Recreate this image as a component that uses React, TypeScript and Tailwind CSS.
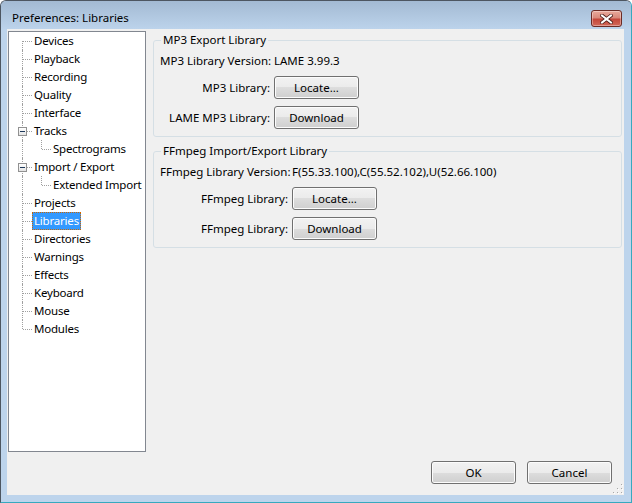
import React from 'react'

type Item = { label: string; level: number; expanded?: boolean; selected?: boolean }

const items: Item[] = [
  { label: 'Devices', level: 0 },
  { label: 'Playback', level: 0 },
  { label: 'Recording', level: 0 },
  { label: 'Quality', level: 0 },
  { label: 'Interface', level: 0 },
  { label: 'Tracks', level: 0, expanded: true },
  { label: 'Spectrograms', level: 1 },
  { label: 'Import / Export', level: 0, expanded: true },
  { label: 'Extended Import', level: 1 },
  { label: 'Projects', level: 0 },
  { label: 'Libraries', level: 0, selected: true },
  { label: 'Directories', level: 0 },
  { label: 'Warnings', level: 0 },
  { label: 'Effects', level: 0 },
  { label: 'Keyboard', level: 0 },
  { label: 'Mouse', level: 0 },
  { label: 'Modules', level: 0 },
]

const TreeRow = ({ item, first, last }: { item: Item; first: boolean; last: boolean }) => {
  const trunk = first
    ? 'top-[9px] bottom-0'
    : last
      ? 'top-0 h-[9px]'
      : 'top-0 bottom-0'
  return (
    <div className="flex h-[18px] items-stretch">
      <div className="relative w-[23px] shrink-0">
        <span className={`absolute left-[13px] w-0 border-l border-dotted border-[#a0a0a0] ${trunk}`} />
        {item.level === 0 && (
          <span className="absolute left-[14px] top-[9px] w-[9px] border-t border-dotted border-[#a0a0a0]" />
        )}
        {item.expanded && (
          <span className="absolute left-[9px] top-[5px] flex h-[9px] w-[9px] items-center justify-center border border-[#919191] bg-[linear-gradient(#ffffff,#e4e4e4)]">
            <span className="h-px w-[5px] bg-[#1e395b]" />
          </span>
        )}
      </div>
      {item.level === 1 && (
        <div className="relative w-[19px] shrink-0">
          <span className="absolute left-[9px] top-0 h-[9px] border-l border-dotted border-[#a0a0a0]" />
          <span className="absolute left-[10px] top-[9px] w-[9px] border-t border-dotted border-[#a0a0a0]" />
        </div>
      )}
      <span
        className={`flex items-center whitespace-nowrap border px-px leading-[16px] tracking-[-0.2px] ${
          item.selected
            ? 'border-dotted border-[#cc6600] bg-[#3399ff] text-white'
            : 'border-transparent'
        }`}
      >
        {item.label}
      </span>
    </div>
  )
}

const Btn = ({ children }: { children: React.ReactNode }) => (
  <button className="h-[23px] w-[85px] rounded-[3px] border border-[#707070] bg-[linear-gradient(#f2f2f2_0%,#ebebeb_50%,#dddddd_50%,#cfcfcf_100%)] text-[11.5px] leading-[16px] text-black shadow-[inset_0_0_0_1px_#fcfcfc]">
    {children}
  </button>
)

const Group = ({
  title,
  labelWidth,
  version,
  rows,
}: {
  title: string
  labelWidth: string
  version: [string, string]
  rows: [string, string][]
}) => (
  <fieldset className="min-w-0 rounded-[3px] border border-[#d5dfe5] px-[6px] pb-[7px] pt-[5px]">
    <legend className="ml-px px-[2px] leading-[16px]">{title}</legend>
    <div className={`grid ${labelWidth} items-center gap-x-[4px] gap-y-[7px]`}>
      <span className="whitespace-nowrap text-right leading-[16px]">{version[0]}</span>
      <span className="whitespace-nowrap leading-[16px]">{version[1]}</span>
      {rows.map(([label, btn], i) => (
        <React.Fragment key={i}>
          <span className="whitespace-nowrap text-right leading-[16px]">{label}</span>
          <div>
            <Btn>{btn}</Btn>
          </div>
        </React.Fragment>
      ))}
    </div>
  </fieldset>
)

export default function App() {
  return (
    <div className="flex h-[503px] w-[632px] flex-col overflow-hidden rounded-t-[6px] border border-[#4d5661] border-b-[#37a9bf] border-r-[#37a9bf] bg-[#bdd4ec] font-['Segoe_UI','Noto_Sans',sans-serif] text-[11.5px] text-black">
      <div className="flex h-[28px] shrink-0 items-start justify-between bg-[linear-gradient(#a3bad3,#bcd3eb)]">
        <span className="pl-[11px] pt-[9px] leading-[16px]">Preferences: Libraries</span>
        <div className="mr-[9px] mt-[9px] flex h-[17px] w-[31px] items-center justify-center rounded-[3px] border border-[#6b2b25] bg-[linear-gradient(#e9a99b_0%,#d98a7c_45%,#c4473a_55%,#d2695a_100%)] shadow-[inset_0_0_0_1px_rgba(255,255,255,0.35)]">
          <svg width="13" height="10" viewBox="0 0 13 10">
            <path d="M2 1.5 L11 8.5 M11 1.5 L2 8.5" stroke="#4a1c18" strokeWidth="3.6" strokeLinecap="square" />
            <path d="M2 1.5 L11 8.5 M11 1.5 L2 8.5" stroke="#ffffff" strokeWidth="2" strokeLinecap="square" />
          </svg>
        </div>
      </div>
      <div className="flex min-h-0 flex-1">
        <div className="w-[6px] shrink-0" />
        <div className="relative flex w-[617px] shrink-0 flex-col bg-[#f0f0f0]">
          <div className="flex items-start">
            <div className="ml-px mt-[2px] h-[421px] w-[138px] shrink-0 border border-[#828790] bg-white">
              {items.map((item, i) => (
                <TreeRow key={item.label} item={item} first={i === 0} last={i === items.length - 1} />
              ))}
            </div>
            <div className="ml-[7px] mt-[3px] flex w-[469px] flex-col gap-[6px]">
              <Group
                title="MP3 Export Library"
                labelWidth="grid-cols-[110px_auto]"
                version={['MP3 Library Version:', 'LAME 3.99.3']}
                rows={[
                  ['MP3 Library:', 'Locate...'],
                  ['LAME MP3 Library:', 'Download'],
                ]}
              />
              <Group
                title="FFmpeg Import/Export Library"
                labelWidth="grid-cols-[128px_auto]"
                version={['FFmpeg Library Version:', 'F(55.33.100),C(55.52.102),U(52.66.100)']}
                rows={[
                  ['FFmpeg Library:', 'Locate...'],
                  ['FFmpeg Library:', 'Download'],
                ]}
              />
            </div>
          </div>
          <div className="mt-auto flex justify-end gap-[11px] pb-[11px] pr-[12px]">
            <Btn>OK</Btn>
            <Btn>Cancel</Btn>
          </div>
          <svg className="absolute bottom-0 right-0" width="12" height="12" viewBox="0 0 12 12">
            {[
              [9, 1],
              [9, 5],
              [5, 5],
              [9, 9],
              [5, 9],
              [1, 9],
            ].map(([x, y], i) => (
              <g key={i}>
                <rect x={x + 1} y={y + 1} width="1" height="1" fill="#ffffff" />
                <rect x={x} y={y} width="1" height="1" fill="#a8a8a8" />
              </g>
            ))}
          </svg>
        </div>
        <div className="w-[7px] shrink-0" />
      </div>
      <div className="h-[7px] shrink-0" />
    </div>
  )
}
